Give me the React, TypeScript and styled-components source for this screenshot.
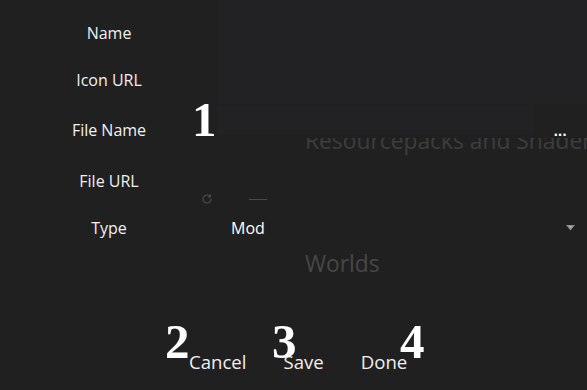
import React from "react";
import styled, { createGlobalStyle } from "styled-components";

const Global = createGlobalStyle`
  html, body { margin: 0; padding: 0; background: #202020; }
  * { box-sizing: border-box; }
`;

const Page = styled.div`
  position: relative;
  width: 587px;
  height: 390px;
  overflow: hidden;
  background: #202020;
  font-family: "Segoe UI", "Open Sans", sans-serif;
`;

/* the page behind the dialog */
const Backdrop = styled.div`
  display: flex;
  flex-direction: column;
  padding-top: 126px;
`;

const GhostTitle = styled.div<{ $color: string }>`
  margin-left: 305px;
  font-size: 22.8px;
  line-height: 30px;
  white-space: nowrap;
  color: ${(p) => p.$color};
`;

const GhostToolbar = styled.div`
  display: flex;
  align-items: center;
  height: 20px;
  margin-top: 33px;
  margin-left: 201px;
  gap: 36px;
`;

const GhostLine = styled.div`
  width: 18px;
  height: 1px;
  background: #4a4a4a;
`;

const WorldsTitle = styled(GhostTitle)`
  margin-top: 40px;
`;

/* dialog overlay */
const Dialog = styled.div`
  position: absolute;
  inset: 0;
  display: flex;
  flex-direction: column;
`;

const Form = styled.div`
  display: grid;
  grid-template-columns: 218px 1fr;
  grid-template-rows: 56px 48px 52px 50px 44px;
`;

const Label = styled.div<{ $offset: number }>`
  display: flex;
  justify-content: center;
  align-items: center;
  padding-top: ${(p) => p.$offset}px;
  font-size: 16px;
  color: #f0f0f0;
`;

const FieldBox = styled.div`
  background: #222224;
`;

const FileField = styled.div`
  align-self: start;
  display: flex;
  align-items: flex-start;
  height: 34px;
  padding-top: 3px;
  background: #202020;
`;

const FileInput = styled.div`
  flex: 1;
  height: 28px;
  background: #222224;
`;

const BrowseButton = styled.div`
  width: 54px;
  height: 31px;
  display: flex;
  justify-content: center;
  align-items: flex-end;
  color: #ffffff;
  font-size: 12px;
  line-height: 12px;
  letter-spacing: -0.3px;
  font-family: "DejaVu Sans", sans-serif;
  font-weight: bold;
`;

const Empty = styled.div``;

const Select = styled.div`
  display: flex;
  align-items: center;
  justify-content: space-between;
  padding: 0 12px 0 13px;
  font-size: 16px;
  color: #ffffff;
`;

const Footer = styled.div`
  margin-top: auto;
  height: 56px;
  display: flex;
  align-items: center;
  padding-left: 189px;
  gap: 37px;
  font-size: 18.6px;
  color: #f0f0f0;
`;

const FooterButton = styled.div`
  line-height: 24px;
`;

const Marker = styled.div<{ $x: number; $y: number }>`
  position: absolute;
  left: ${(p) => p.$x}px;
  top: ${(p) => p.$y}px;
  font-family: "Liberation Serif", "Times New Roman", serif;
  font-weight: bold;
  font-size: 49px;
  line-height: 49px;
  color: #ffffff;
`;

const RefreshIcon = () => (
  <svg width="12" height="12" viewBox="0 0 12 12" fill="none">
    <path
      d="M10 6a4 4 0 1 1-1.2-2.85"
      stroke="#4a4a4a"
      strokeWidth="1.2"
      strokeLinecap="round"
    />
    <path d="M9.4 1.6v2.3H7.1" stroke="#4a4a4a" strokeWidth="1.2" />
  </svg>
);

const Caret = () => (
  <svg width="9" height="6" viewBox="0 0 9 6">
    <path d="M0 0h9L4.5 5.5z" fill="#8a8a8a" />
    <path d="M2.5 1h4L4.5 3.5z" fill="#b0b0b0" />
  </svg>
);

export default function App() {
  return (
    <Page>
      <Global />
      <Backdrop>
        <GhostTitle $color="#3d3d3d">Resourcepacks and Shaders</GhostTitle>
        <GhostToolbar>
          <RefreshIcon />
          <GhostLine />
        </GhostToolbar>
        <WorldsTitle $color="#474747">Worlds</WorldsTitle>
      </Backdrop>

      <Dialog>
        <Form>
          <Label $offset={10}>Name</Label>
          <FieldBox />
          <Label $offset={0}>Icon URL</Label>
          <FieldBox />
          <Label $offset={0}>File Name</Label>
          <FileField>
            <FileInput />
            <BrowseButton>...</BrowseButton>
          </FileField>
          <Label $offset={0}>File URL</Label>
          <Empty />
          <Label $offset={0}>Type</Label>
          <Select>
            <span>Mod</span>
            <Caret />
          </Select>
        </Form>
        <Footer>
          <FooterButton>Cancel</FooterButton>
          <FooterButton>Save</FooterButton>
          <FooterButton>Done</FooterButton>
        </Footer>
      </Dialog>

      <Marker $x={192} $y={95}>1</Marker>
      <Marker $x={165} $y={317}>2</Marker>
      <Marker $x={272} $y={317}>3</Marker>
      <Marker $x={400} $y={317}>4</Marker>
    </Page>
  );
}
